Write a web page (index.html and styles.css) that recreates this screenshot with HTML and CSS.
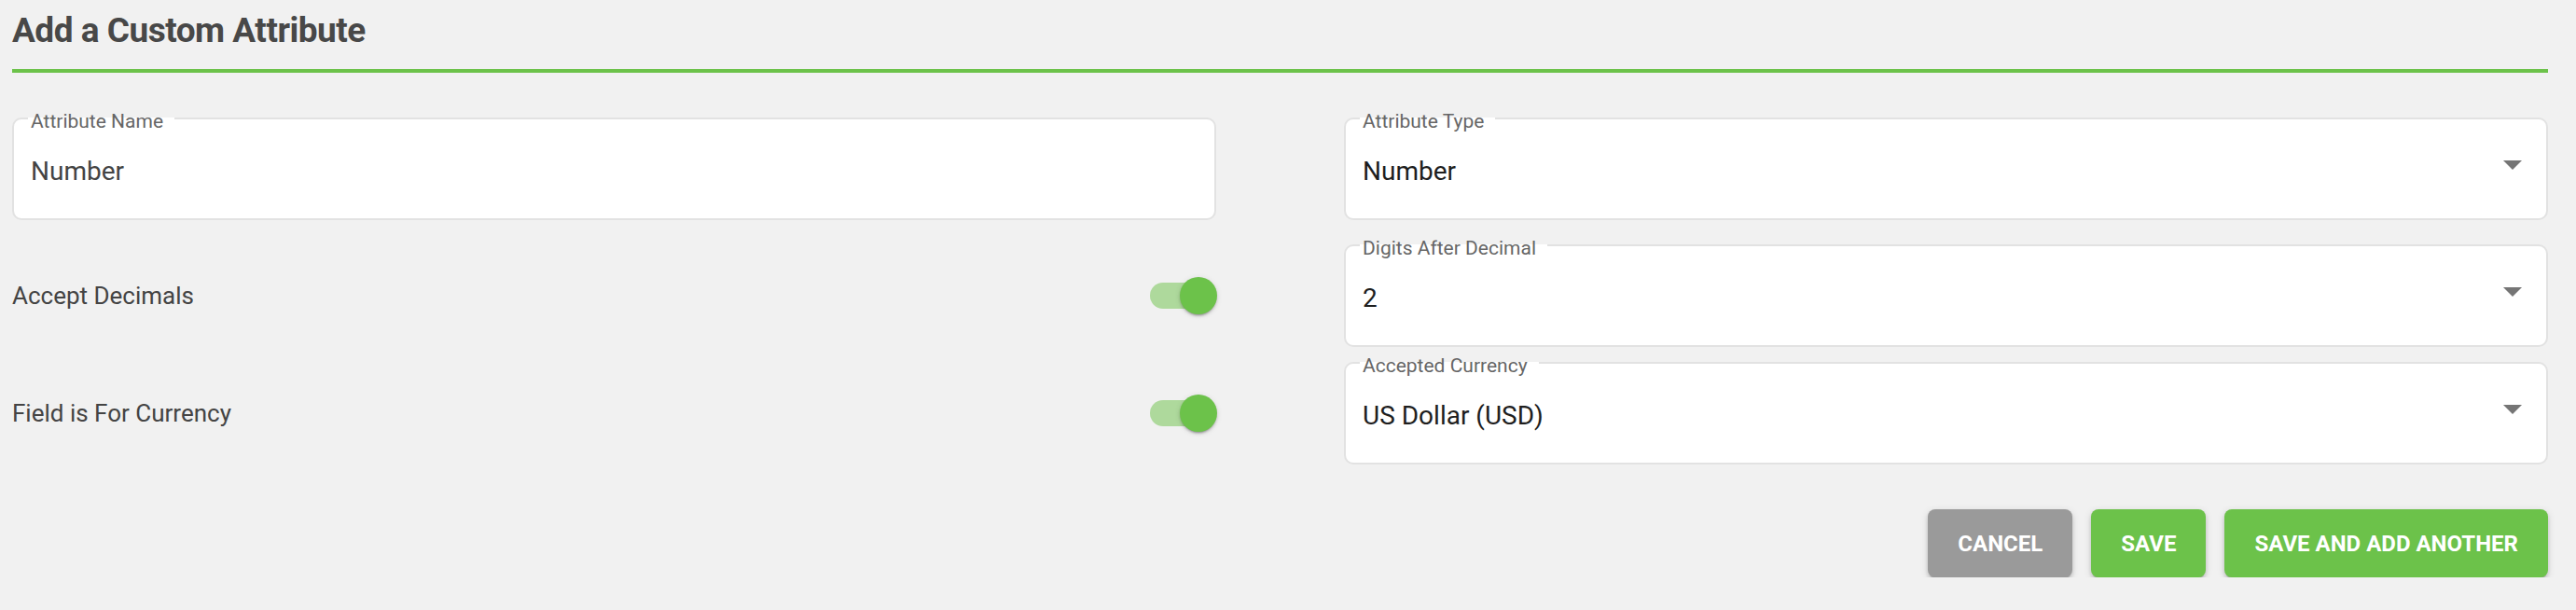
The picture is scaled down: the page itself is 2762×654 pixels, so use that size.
FILE: index.html
```html
<!DOCTYPE html>
<html lang="en">
<head>
<meta charset="utf-8">
<title>Add a Custom Attribute</title>
<link rel="stylesheet" href="styles.css">
</head>
<body>
<h1 class="title">Add a Custom Attribute</h1>
<div class="form">
  <div class="field first-row">
    <span class="field-label">Attribute Name</span>
    <div class="field-value input-value">Number</div>
  </div>
  <div class="field first-row">
    <span class="field-label">Attribute Type</span>
    <div class="field-value select-value">Number</div>
    <svg class="arrow" viewBox="7 10 10 5" width="20" height="10"><path d="M7 10l5 5 5-5z"/></svg>
  </div>
  <div class="toggle-row">
    <span class="toggle-label">Accept Decimals</span>
    <span class="switch"><span class="track"></span><span class="thumb"></span></span>
  </div>
  <div class="field">
    <span class="field-label">Digits After Decimal</span>
    <div class="field-value select-value">2</div>
    <svg class="arrow" viewBox="7 10 10 5" width="20" height="10"><path d="M7 10l5 5 5-5z"/></svg>
  </div>
  <div class="toggle-row">
    <span class="toggle-label">Field is For Currency</span>
    <span class="switch"><span class="track"></span><span class="thumb"></span></span>
  </div>
  <div class="field">
    <span class="field-label">Accepted Currency</span>
    <div class="field-value select-value">US Dollar (USD)</div>
    <svg class="arrow" viewBox="7 10 10 5" width="20" height="10"><path d="M7 10l5 5 5-5z"/></svg>
  </div>
</div>
<div class="actions">
  <button class="btn btn-cancel">Cancel</button>
  <button class="btn btn-primary">Save</button>
  <button class="btn btn-primary">Save and Add Another</button>
</div>
</body>
</html>
```
FILE: styles.css
```css
html, body {
  margin: 0;
  background: #f1f1f1;
}
body {
  padding: 10px 30px 0 13px;
  font-family: Roboto, "Liberation Sans", Arial, sans-serif;
  color: #444;
}
.title {
  margin: 0;
  font-size: 37px;
  line-height: 45px;
  font-weight: 700;
  letter-spacing: -0.5px;
  color: #484848;
  padding-bottom: 19px;
  border-bottom: 4px solid #6cc24a;
}
.form {
  margin-top: 48px;
  display: grid;
  grid-template-columns: 1fr 1fr;
  column-gap: 137px;
  row-gap: 16px;
}
.first-row {
  margin-bottom: 10px;
}
.field {
  position: relative;
  height: 110px;
  box-sizing: border-box;
  background: #fff;
  border: 2px solid #e2e2e2;
  border-radius: 10px;
  padding: 39px 60px 0 18px;
}
.field-label {
  position: absolute;
  top: -8px;
  left: 15px;
  padding: 0 12px 0 3px;
  font-size: 21px;
  line-height: 20px;
  color: #666;
  background: linear-gradient(to bottom, rgba(255,255,255,0) 6px, #fff 6px);
  white-space: nowrap;
}
.field-value {
  font-size: 28px;
  line-height: 33px;
  white-space: nowrap;
}
.input-value {
  color: #444;
}
.select-value {
  color: #1e1e1e;
}
.arrow {
  position: absolute;
  right: 26px;
  top: 44px;
  fill: #757575;
}
.toggle-row {
  display: flex;
  align-items: center;
  justify-content: space-between;
  height: 110px;
}
.toggle-label {
  font-size: 26px;
  color: #444;
}
.switch {
  position: relative;
  width: 72px;
  height: 40px;
  margin-right: -1px;
  flex: none;
}
.track {
  position: absolute;
  left: 0;
  top: 6px;
  width: 68px;
  height: 28px;
  border-radius: 14px;
  background: #aed99c;
}
.thumb {
  position: absolute;
  right: 0;
  top: 0;
  width: 40px;
  height: 40px;
  border-radius: 50%;
  background: #6cc24a;
  box-shadow: 0 3px 2px -2px rgba(0,0,0,0.25), 0 2px 3px rgba(0,0,0,0.14), 0 1px 6px rgba(0,0,0,0.1);
}
.actions {
  display: flex;
  justify-content: flex-end;
  gap: 20px;
  margin-top: 48px;
}
.btn {
  height: 73px;
  padding: 0 32px;
  border: none;
  border-radius: 8px;
  font-family: Roboto, "Liberation Sans", Arial, sans-serif;
  font-size: 24px;
  font-weight: 700;
  text-transform: uppercase;
  color: #fff;
  box-shadow: 0 5px 2px -3px rgba(0,0,0,0.2), 0 3px 4px rgba(0,0,0,0.14), 0 2px 9px rgba(0,0,0,0.12);
  cursor: pointer;
}
.btn-cancel {
  background: #9a9a9a;
}
.btn-primary {
  background: #6cc24a;
}
```
